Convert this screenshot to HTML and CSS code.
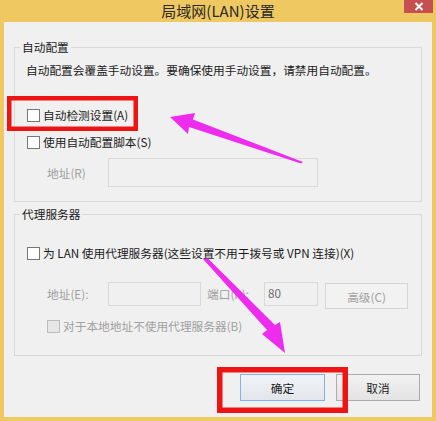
FILE: index.html
```html
<!DOCTYPE html>
<html lang="zh-CN">
<head>
<meta charset="utf-8">
<title>局域网(LAN)设置</title>
<link rel="stylesheet" href="styles.css">
</head>
<body>
<div class="window">
  <div class="titlebar">
    <div></div>
    <div class="title">局域网(LAN)设置</div>
    <div class="close"><svg width="10" height="9" viewBox="0 0 10 9"><path d="M1.5 1 L8.5 8 M8.5 1 L1.5 8" stroke="#fff" stroke-width="2" fill="none"/></svg></div>
  </div>
  <div class="client">
    <section class="group g1">
      <div class="legend">自动配置</div>
      <p class="desc">自动配置会覆盖手动设置。要确保使用手动设置，请禁用自动配置。</p>
      <label class="cb-row r1"><input type="checkbox"><span>自动检测设置(A)</span></label>
      <label class="cb-row r2"><input type="checkbox"><span>使用自动配置脚本(S)</span></label>
      <div class="field-row addr-r">
        <span class="flabel dis">地址(R)</span>
        <input class="tbox tall" type="text" disabled>
      </div>
    </section>
    <section class="group g2">
      <div class="legend">代理服务器</div>
      <label class="cb-row r3"><input type="checkbox"><span>为 LAN 使用代理服务器(这些设置不用于拨号或 VPN 连接)(X)</span></label>
      <div class="field-row addr-e">
        <span class="flabel dis">地址(E):</span>
        <input class="tbox addr" type="text" disabled>
        <span class="flabel dis port-l">端口(P):</span>
        <input class="tbox port" type="text" value="80" disabled>
        <button class="btn adv" disabled>高级(C)</button>
      </div>
      <label class="cb-row r4 dis"><input type="checkbox" disabled><span>对于本地地址不使用代理服务器(B)</span></label>
    </section>
    <div class="actions">
      <button class="btn ok">确定</button>
      <button class="btn cancel">取消</button>
    </div>
  </div>
  <svg class="annot" width="436" height="421" viewBox="0 0 436 421">
    <rect x="9.25" y="98.25" width="126.5" height="30.5" fill="none" stroke="#ee1414" stroke-width="4.5"/>
    <rect x="219.75" y="369.75" width="125.5" height="40.5" fill="none" stroke="#ee1414" stroke-width="5.5"/>
    <polygon points="170,117 195,113 193,119.5 303,162 301,163.5 189,127 188,134" fill="#ee2cee"/>
    <polygon points="203,259 208,258.5 275,325 280,322 285,353 262,334 267,330" fill="#ee2cee"/>
  </svg>
</div>
</body>
</html>
```
FILE: styles.css
```css
* { box-sizing: border-box; }
html, body { margin: 0; padding: 0; }
body {
  font-family: "Noto Sans CJK SC", "Noto Sans", sans-serif;
  font-size: 11.7px;
  color: #1b1b1b;
  background: #efc862;
}
.window {
  position: relative;
  width: 436px;
  height: 421px;
  background: #efc862;
  display: flex;
  flex-direction: column;
  overflow: hidden;
}
.titlebar {
  height: 22px;
  display: grid;
  grid-template-columns: 1fr auto 1fr;
  flex: none;
}
.title {
  font-size: 15px;
  line-height: 22px;
  color: #2a2a2a;
  white-space: nowrap;
}
.close {
  justify-self: end;
  align-self: start;
  width: 29px;
  height: 13px;
  margin-right: 3px;
  background: #c84f4f;
  display: flex;
  align-items: center;
  justify-content: center;
}
.close svg { display: block; }
.client {
  flex: 1;
  margin: 0 4px 4px 4px;
  background: #f0f0f0;
  display: flex;
  flex-direction: column;
}
.group {
  border: 1px solid #d9d9d9;
  margin: 0 10px;
  display: flex;
  flex-direction: column;
  align-items: flex-start;
}
.g1 { margin-top: 25px; }
.g2 { margin-top: 12px; }
.legend {
  margin: -9px 0 0 5px;
  padding: 0 2px;
  line-height: 16px;
  background: #f0f0f0;
  white-space: nowrap;
}
.desc {
  margin: 7px 0 0 11px;
  line-height: 16px;
  white-space: nowrap;
}
.cb-row {
  display: flex;
  align-items: center;
  height: 16px;
  line-height: 16px;
  white-space: nowrap;
  margin-left: 12px;
}
.cb-row input {
  appearance: none;
  -webkit-appearance: none;
  width: 13px;
  height: 13px;
  margin: 0 3px 0 0;
  border: 1px solid #777;
  background: #fff;
  flex: none;
}
.cb-row.dis { color: #a0a0a0; }
.cb-row.dis input { border-color: #bcbcbc; background: #e6e6e6; }
.r1 { margin-top: 29px; }
.r2 { margin-top: 11px; }
.r3 { margin-top: 23px; }
.r4 { margin-top: 9px; margin-left: 32px; margin-bottom: 21px; }
.field-row {
  display: flex;
  align-items: flex-start;
  margin-left: 32px;
}
.addr-r { margin-top: 8px; margin-bottom: 14px; }
.addr-e { margin-top: 21px; }
.flabel {
  line-height: 24px;
  white-space: nowrap;
}
.addr-r .flabel { line-height: 29px; width: 61px; }
.addr-e .flabel { width: 61px; }
.addr-e .port-l { width: 57px; margin-left: 6px; }
.dis { color: #a0a0a0; }
.tbox {
  height: 24px;
  border: 1px solid #d9d9d9;
  background: #f0f0f0;
  font: inherit;
  color: #6d6d6d;
  padding: 0 3px;
  margin: 0;
  outline: none;
}
.tbox.tall { height: 29px; width: 210px; }
.tbox.addr { width: 93px; }
.tbox.port { width: 54px; padding-bottom: 3px; }
.btn {
  font: inherit;
  margin: 0;
  padding: 0;
  color: #1b1b1b;
  border: 1px solid #acacac;
  background: linear-gradient(#f2f2f2, #e3e3e3);
}
.btn.adv {
  width: 83px;
  height: 26px;
  margin: 1px 0 0 7px;
  border-color: #d6d6d6;
  background: #f2f2f2;
  color: #a0a0a0;
}
.actions {
  display: flex;
  justify-content: flex-end;
  gap: 11px;
  margin: 18px 12px 0 0;
}
.btn.ok {
  width: 85px;
  height: 27px;
  border-color: #7eb4ea;
  background: linear-gradient(#f0f3f7, #e2e6eb);
}
.btn.cancel {
  width: 84px;
  height: 27px;
}
.annot {
  position: absolute;
  left: 0;
  top: 0;
  pointer-events: none;
}
```
